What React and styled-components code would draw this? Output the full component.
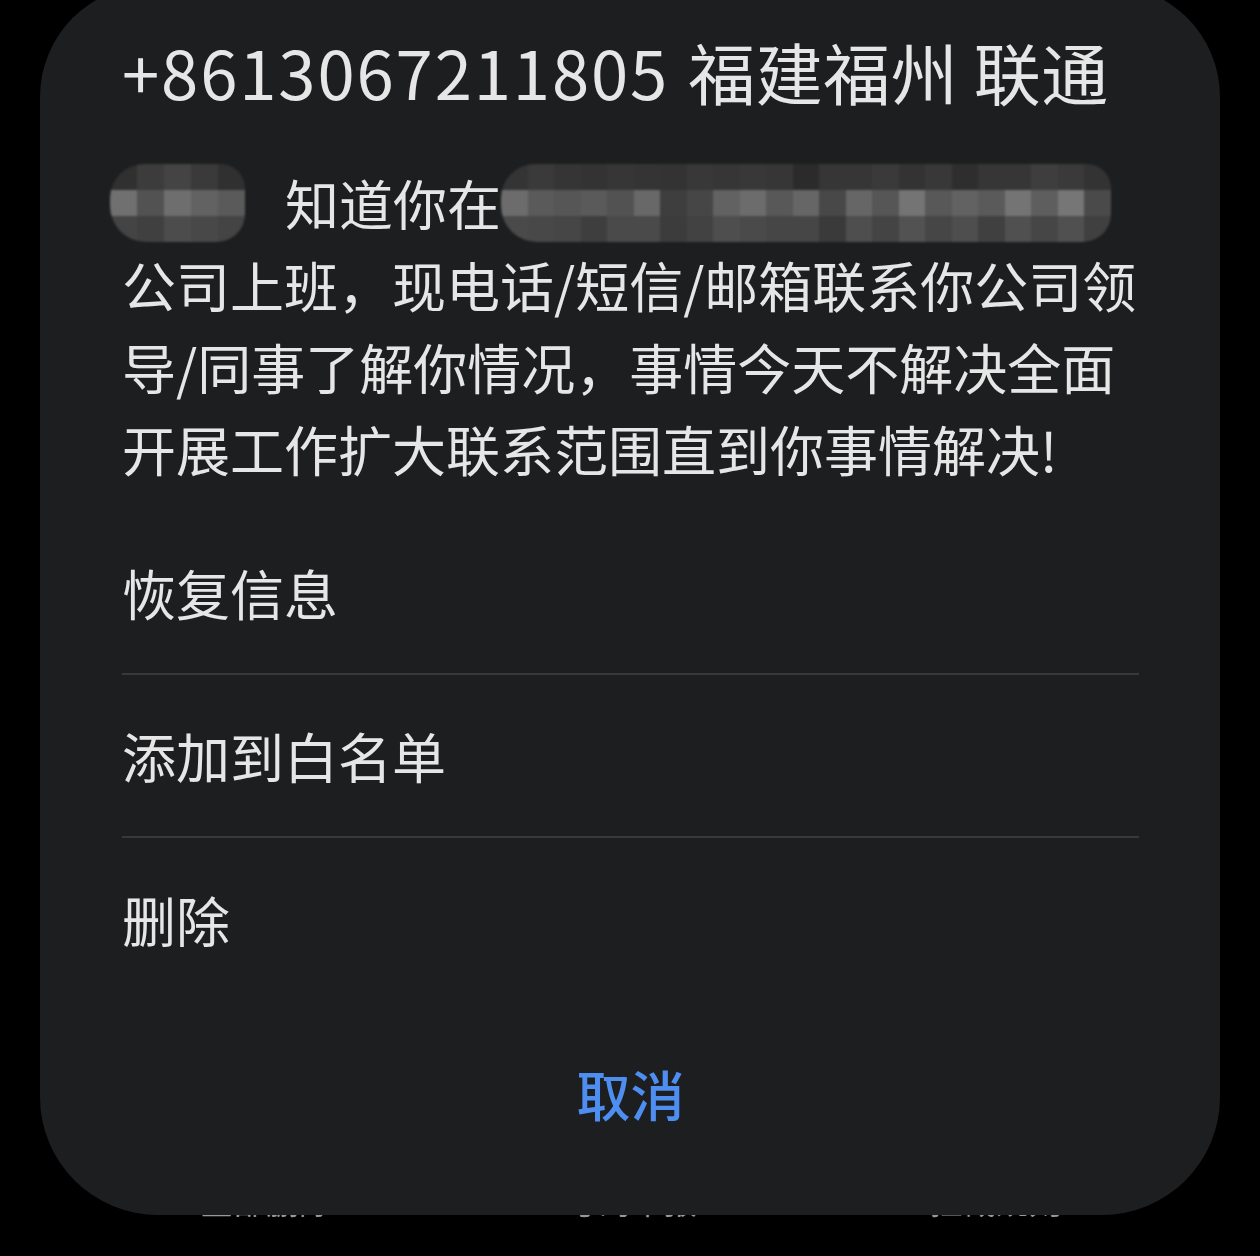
import styled, { createGlobalStyle } from "styled-components";

const GlobalStyle = createGlobalStyle`
  html, body {
    margin: 0;
    padding: 0;
    background: #000;
  }
  body {
    font-family: "Noto Sans CJK SC", "Noto Sans", sans-serif;
  }
`;

const Page = styled.div`
  position: relative;
  width: 1260px;
  height: 1256px;
  overflow: hidden;
  background: #000;
  display: flex;
  flex-direction: column;
  justify-content: flex-end;
`;

// toolbar of the list page, mostly hidden under the sheet
const Toolbar = styled.div`
  display: flex;
  justify-content: space-between;
  padding: 0 198px 36px 200px;
  color: #9a9a9a;
  font-size: 33px;
  line-height: 40px;
`;

const Sheet = styled.div`
  position: absolute;
  top: -15px;
  left: 40px;
  right: 40px;
  height: 1230px;
  box-sizing: border-box;
  background: #1d1e20;
  border-radius: 112px 112px 118px 118px;
  padding: 41px 81px 0 82px;
  display: flex;
  flex-direction: column;
  color: #e6e6e6;
`;

const Title = styled.div`
  font-size: 67px;
  line-height: 90px;
  white-space: nowrap;
`;

const Number = styled.span`
  letter-spacing: 1.9px;
  margin-right: 4px;
`;

const Place = styled.span`
  letter-spacing: 0.5px;
`;

const Message = styled.div`
  margin-top: 46px;
  font-size: 54px;
  line-height: 82px;
`;

const Line = styled.div`
  display: flex;
  align-items: center;
  height: 82px;
  white-space: nowrap;
`;

const Mosaic = styled.span`
  display: inline-grid;
  grid-template-columns: repeat(${(p) => p.$cols}, ${(p) => p.$cell}px);
  grid-auto-rows: 26px;
  margin-left: ${(p) => p.$ml || 0}px;
  margin-right: ${(p) => p.$mr || 0}px;
  border-radius: 34px 24px 28px 36px;
  overflow: hidden;
  filter: blur(1px);
`;

const Cell = styled.span`
  background: ${(p) => p.$c};
`;

const Menu = styled.div`
  margin-top: 22px;
  display: flex;
  flex-direction: column;
`;

const MenuItem = styled.div`
  height: 163px;
  box-sizing: border-box;
  display: flex;
  align-items: center;
  font-size: 54px;
  border-bottom: ${(p) => (p.$last ? "none" : "2px solid #38393b")};
`;

const Cancel = styled.div`
  margin-top: 32px;
  height: 120px;
  display: flex;
  align-items: center;
  justify-content: center;
  font-size: 54px;
  font-weight: 500;
  color: #4d8ef0;
`;

const g = (v) => `#${v}${v}${v}`;

const smallRows = [
  ["30", "3c", "44", "3a", "30"],
  ["70", "52", "6e", "62", "5a"],
  ["44", "40", "4c", "48", "44"],
];

const bigRows = [
  ["34", "3a", "35", "33", "36", "34", "33", "38", "36", "38", "36", "2b", "36", "36", "3a", "33", "38", "2e", "36", "36", "3e", "3a", "33"],
  ["6c", "5a", "56", "5a", "52", "68", "3e", "46", "62", "6c", "58", "66", "48", "66", "56", "74", "58", "62", "5a", "74", "5e", "76", "4a"],
  ["4a", "48", "46", "3e", "4a", "4a", "3c", "42", "4e", "4a", "46", "46", "3a", "4e", "44", "52", "46", "4e", "40", "50", "46", "50", "40"],
];

function Pixelated({ rows, cell, ml, mr }) {
  return (
    <Mosaic $cols={rows[0].length} $cell={cell} $ml={ml} $mr={mr}>
      {rows.flat().map((v, i) => (
        <Cell key={i} $c={g(v)} />
      ))}
    </Mosaic>
  );
}

export default function App() {
  return (
    <>
      <GlobalStyle />
      <Page>
        <Toolbar>
          <span>全部删除</span>
          <span>号码举报</span>
          <span>拦截规则</span>
        </Toolbar>
        <Sheet>
          <Title>
            <Number>+8613067211805</Number> <Place>福建福州 联通</Place>
          </Title>
          <Message>
            <Line>
              <Pixelated rows={smallRows} cell={27} ml={-12} mr={40} />
              知道你在
              <Pixelated rows={bigRows} cell={26.5} />
            </Line>
            <Line>公司上班，现电话/短信/邮箱联系你公司领</Line>
            <Line>导/同事了解你情况，事情今天不解决全面</Line>
            <Line>开展工作扩大联系范围直到你事情解决!</Line>
          </Message>
          <Menu>
            <MenuItem>恢复信息</MenuItem>
            <MenuItem>添加到白名单</MenuItem>
            <MenuItem $last>删除</MenuItem>
          </Menu>
          <Cancel>取消</Cancel>
        </Sheet>
      </Page>
    </>
  );
}
